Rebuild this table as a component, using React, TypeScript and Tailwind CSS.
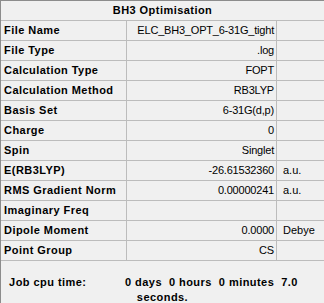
import React from 'react';

type Row = { label: string; value?: string; unit?: string };

const rows: Row[] = [
  { label: 'File Name', value: 'ELC_BH3_OPT_6-31G_tight' },
  { label: 'File Type', value: '.log' },
  { label: 'Calculation Type', value: 'FOPT' },
  { label: 'Calculation Method', value: 'RB3LYP' },
  { label: 'Basis Set', value: '6-31G(d,p)' },
  { label: 'Charge', value: '0' },
  { label: 'Spin', value: 'Singlet' },
  { label: 'E(RB3LYP)', value: '-26.61532360', unit: 'a.u.' },
  { label: 'RMS Gradient Norm', value: '0.00000241', unit: 'a.u.' },
  { label: 'Imaginary Freq' },
  { label: 'Dipole Moment', value: '0.0000', unit: 'Debye' },
  { label: 'Point Group', value: 'CS' },
];

const App: React.FC = () => {
  return (
    <div
      className="w-[324px] h-[303px] overflow-hidden bg-[#f0f0f0] border-t border-l border-[#8c8c8c] text-[11px] leading-[19px] text-black"
      style={{ fontFamily: '"Liberation Sans", Arial, sans-serif' }}
    >
      {/* title bar */}
      <div className="h-[20px] border-b border-[#bcbcbc] text-center font-bold tracking-[0.45px]">BH3 Optimisation</div>

      {/* summary table */}
      {rows.map((row) => (
        <div key={row.label} className="flex h-[20px] border-b border-[#bcbcbc]">
          <div className="w-[126px] shrink-0 border-r border-[#bcbcbc] pl-[3px] font-bold tracking-[0.45px] whitespace-nowrap">
            {row.label}
          </div>
          <div className="w-[150px] shrink-0 border-r border-[#bcbcbc] pr-[2px] text-right tracking-[-0.2px] whitespace-nowrap">
            {row.value}
          </div>
          <div className="flex-1 pl-[6px] whitespace-nowrap">{row.unit}</div>
        </div>
      ))}

      {/* cpu time footer */}
      <div className="pt-[14px] text-center font-bold tracking-[0.45px] leading-[15px] whitespace-pre">
        <div className="pr-[18px]">{'Job cpu time:           0 days  0 hours  0 minutes  7.0'}</div>
        <div>seconds.</div>
      </div>
    </div>
  );
};

export default App;
